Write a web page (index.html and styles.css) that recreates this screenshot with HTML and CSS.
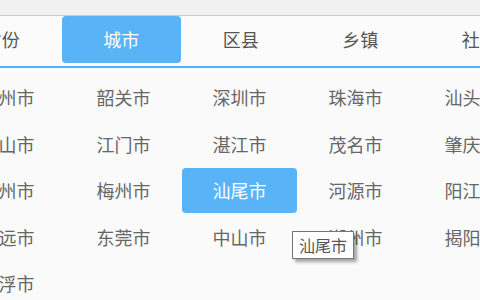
FILE: index.html
```html
<!DOCTYPE html>
<html lang="zh-CN">
  <head>
    <meta charset="UTF-8" />
    <meta name="viewport" content="width=device-width, initial-scale=1.0" />
    <title>选择地区</title>
    <link rel="stylesheet" href="styles.css">
  </head>
  <body>
    <div class="topBand"></div>
    <div class="panel">
      <div class="tabs">
        <div class="tab">省份</div>
        <div class="tab active">城市</div>
        <div class="tab">区县</div>
        <div class="tab">乡镇</div>
        <div class="tab">社区</div>
      </div>
      <div class="cityGrid">
        <div class="city">广州市</div>
        <div class="city">韶关市</div>
        <div class="city">深圳市</div>
        <div class="city">珠海市</div>
        <div class="city">汕头市</div>
        <div class="city">佛山市</div>
        <div class="city">江门市</div>
        <div class="city">湛江市</div>
        <div class="city">茂名市</div>
        <div class="city">肇庆市</div>
        <div class="city">惠州市</div>
        <div class="city">梅州市</div>
        <div class="city selected">汕尾市</div>
        <div class="city">河源市</div>
        <div class="city">阳江市</div>
        <div class="city">清远市</div>
        <div class="city">东莞市</div>
        <div class="city">中山市</div>
        <div class="city">潮州市</div>
        <div class="city">揭阳市</div>
        <div class="city">云浮市</div>
      </div>
    </div>
    <div class="tooltip">汕尾市</div>
  </body>
</html>
```

FILE: styles.css
```css
body {
  margin: 0;
  width: 480px;
  height: 300px;
  overflow: hidden;
  background-color: #fafafa;
  font-family: "Noto Sans CJK SC", "Noto Sans", sans-serif;
}
.topBand {
  height: 15px;
  background-color: #f0f0f0;
}
.panel {
  margin-left: -58px;
  width: 600px;
}
.tabs {
  display: flex;
  background-color: #fbfbfb;
  border-top: 1px solid #9fd3f8;
  border-bottom: 2px solid #55b1f5;
  padding-bottom: 3px;
}
.tab {
  width: 119.5px;
  height: 47px;
  line-height: 47px;
  text-align: center;
  font-size: 18px;
  color: #555;
  border-radius: 4px;
}
.tab.active {
  background-color: #58b4f7;
  color: #fff;
}
.cityGrid {
  display: grid;
  grid-template-columns: repeat(5, 115px);
  grid-auto-rows: 45px;
  column-gap: 1px;
  row-gap: 1.5px;
  padding-top: 7px;
  padding-left: 8px;
}
.city {
  line-height: 45px;
  text-align: center;
  font-size: 18px;
  color: #666;
  border-radius: 4px;
}
.city.selected {
  background-color: #58b4f7;
  color: #fff;
}
.tooltip {
  position: absolute;
  left: 292px;
  top: 231px;
  width: 60px;
  height: 26px;
  line-height: 26px;
  text-align: center;
  font-size: 16px;
  color: #555;
  background-color: #fff;
  border: 1px solid #767676;
  box-shadow: 3px 3px 3px rgba(0, 0, 0, 0.35);
}
```
